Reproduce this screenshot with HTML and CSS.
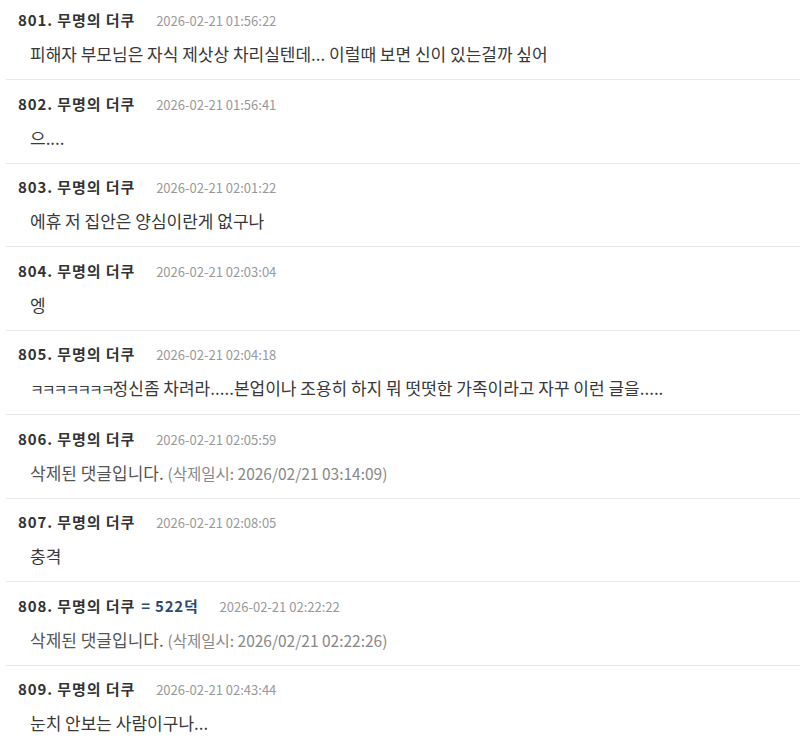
FILE: index.html
```html
<!DOCTYPE html>
<html>
<head>
    <meta charset="utf-8">
    <title>댓글</title>
    <link rel="stylesheet" href="styles.css">
</head>
<body>
    <ul class="cmt-list">
        <li class="cmt">
            <div class="cmt-head"><span class="cmt-name">801. 무명의 더쿠</span><span class="cmt-date">2026-02-21 01:56:22</span></div>
            <div class="cmt-body">피해자 부모님은 자식 제삿상 차리실텐데... 이럴때 보면 신이 있는걸까 싶어</div>
        </li>
        <li class="cmt">
            <div class="cmt-head"><span class="cmt-name">802. 무명의 더쿠</span><span class="cmt-date">2026-02-21 01:56:41</span></div>
            <div class="cmt-body">으....</div>
        </li>
        <li class="cmt">
            <div class="cmt-head"><span class="cmt-name">803. 무명의 더쿠</span><span class="cmt-date">2026-02-21 02:01:22</span></div>
            <div class="cmt-body">에휴 저 집안은 양심이란게 없구나</div>
        </li>
        <li class="cmt">
            <div class="cmt-head"><span class="cmt-name">804. 무명의 더쿠</span><span class="cmt-date">2026-02-21 02:03:04</span></div>
            <div class="cmt-body">엥</div>
        </li>
        <li class="cmt">
            <div class="cmt-head"><span class="cmt-name">805. 무명의 더쿠</span><span class="cmt-date">2026-02-21 02:04:18</span></div>
            <div class="cmt-body"><span class="jamo">ㅋㅋㅋㅋㅋㅋㅋ</span>정신좀 차려라.....본업이나 조용히 하지 뭐 떳떳한 가족이라고 자꾸 이런 글을.....</div>
        </li>
        <li class="cmt">
            <div class="cmt-head"><span class="cmt-name">806. 무명의 더쿠</span><span class="cmt-date">2026-02-21 02:05:59</span></div>
            <div class="cmt-body deleted">삭제된 댓글입니다. <span class="del-time">(삭제일시: 2026/02/21 03:14:09)</span></div>
        </li>
        <li class="cmt">
            <div class="cmt-head"><span class="cmt-name">807. 무명의 더쿠</span><span class="cmt-date">2026-02-21 02:08:05</span></div>
            <div class="cmt-body">충격</div>
        </li>
        <li class="cmt">
            <div class="cmt-head"><span class="cmt-name">808. 무명의 더쿠</span><span class="cmt-reply">= 522덕</span><span class="cmt-date">2026-02-21 02:22:22</span></div>
            <div class="cmt-body deleted">삭제된 댓글입니다. <span class="del-time">(삭제일시: 2026/02/21 02:22:26)</span></div>
        </li>
        <li class="cmt">
            <div class="cmt-head"><span class="cmt-name">809. 무명의 더쿠</span><span class="cmt-date">2026-02-21 02:43:44</span></div>
            <div class="cmt-body">눈치 안보는 사람이구나...</div>
        </li>
    </ul>
</body>
</html>
```

FILE: styles.css
```css
body {
    margin: 0;
    padding: 0;
    background: #fff;
    font-family: "Noto Sans CJK KR", "Noto Sans", sans-serif;
    color: #333;
    overflow: hidden;
}

.cmt-list {
    list-style: none;
    margin: -3.5px 0 0 6px;
    padding: 0;
}

.cmt {
    padding: 12.5px 0 14px 12px;
    border-bottom: 1px solid #e9e9e9;
}

.cmt-head {
    height: 20px;
    line-height: 20px;
    white-space: nowrap;
}

.cmt-name {
    font-size: 15px;
    font-weight: bold;
    letter-spacing: 0.9px;
    color: #333;
}

.cmt-reply {
    margin-left: 6px;
    font-size: 15px;
    font-weight: bold;
    letter-spacing: 0.8px;
    color: #2b4a6d;
}

.cmt-date {
    margin-left: 21px;
    font-size: 13px;
    color: #999;
}

.cmt-body {
    margin-top: 14px;
    padding-left: 12px;
    font-size: 17px;
    line-height: 22px;
    color: #383838;
    white-space: nowrap;
}

/* 자모는 폭이 넓게 나와서 줄여줌 */
.jamo {
    font-size: 15px;
    letter-spacing: -2px;
}

.cmt-body.deleted {
    color: #555;
}

.del-time {
    font-size: 15.5px;
    color: #888;
}
```
